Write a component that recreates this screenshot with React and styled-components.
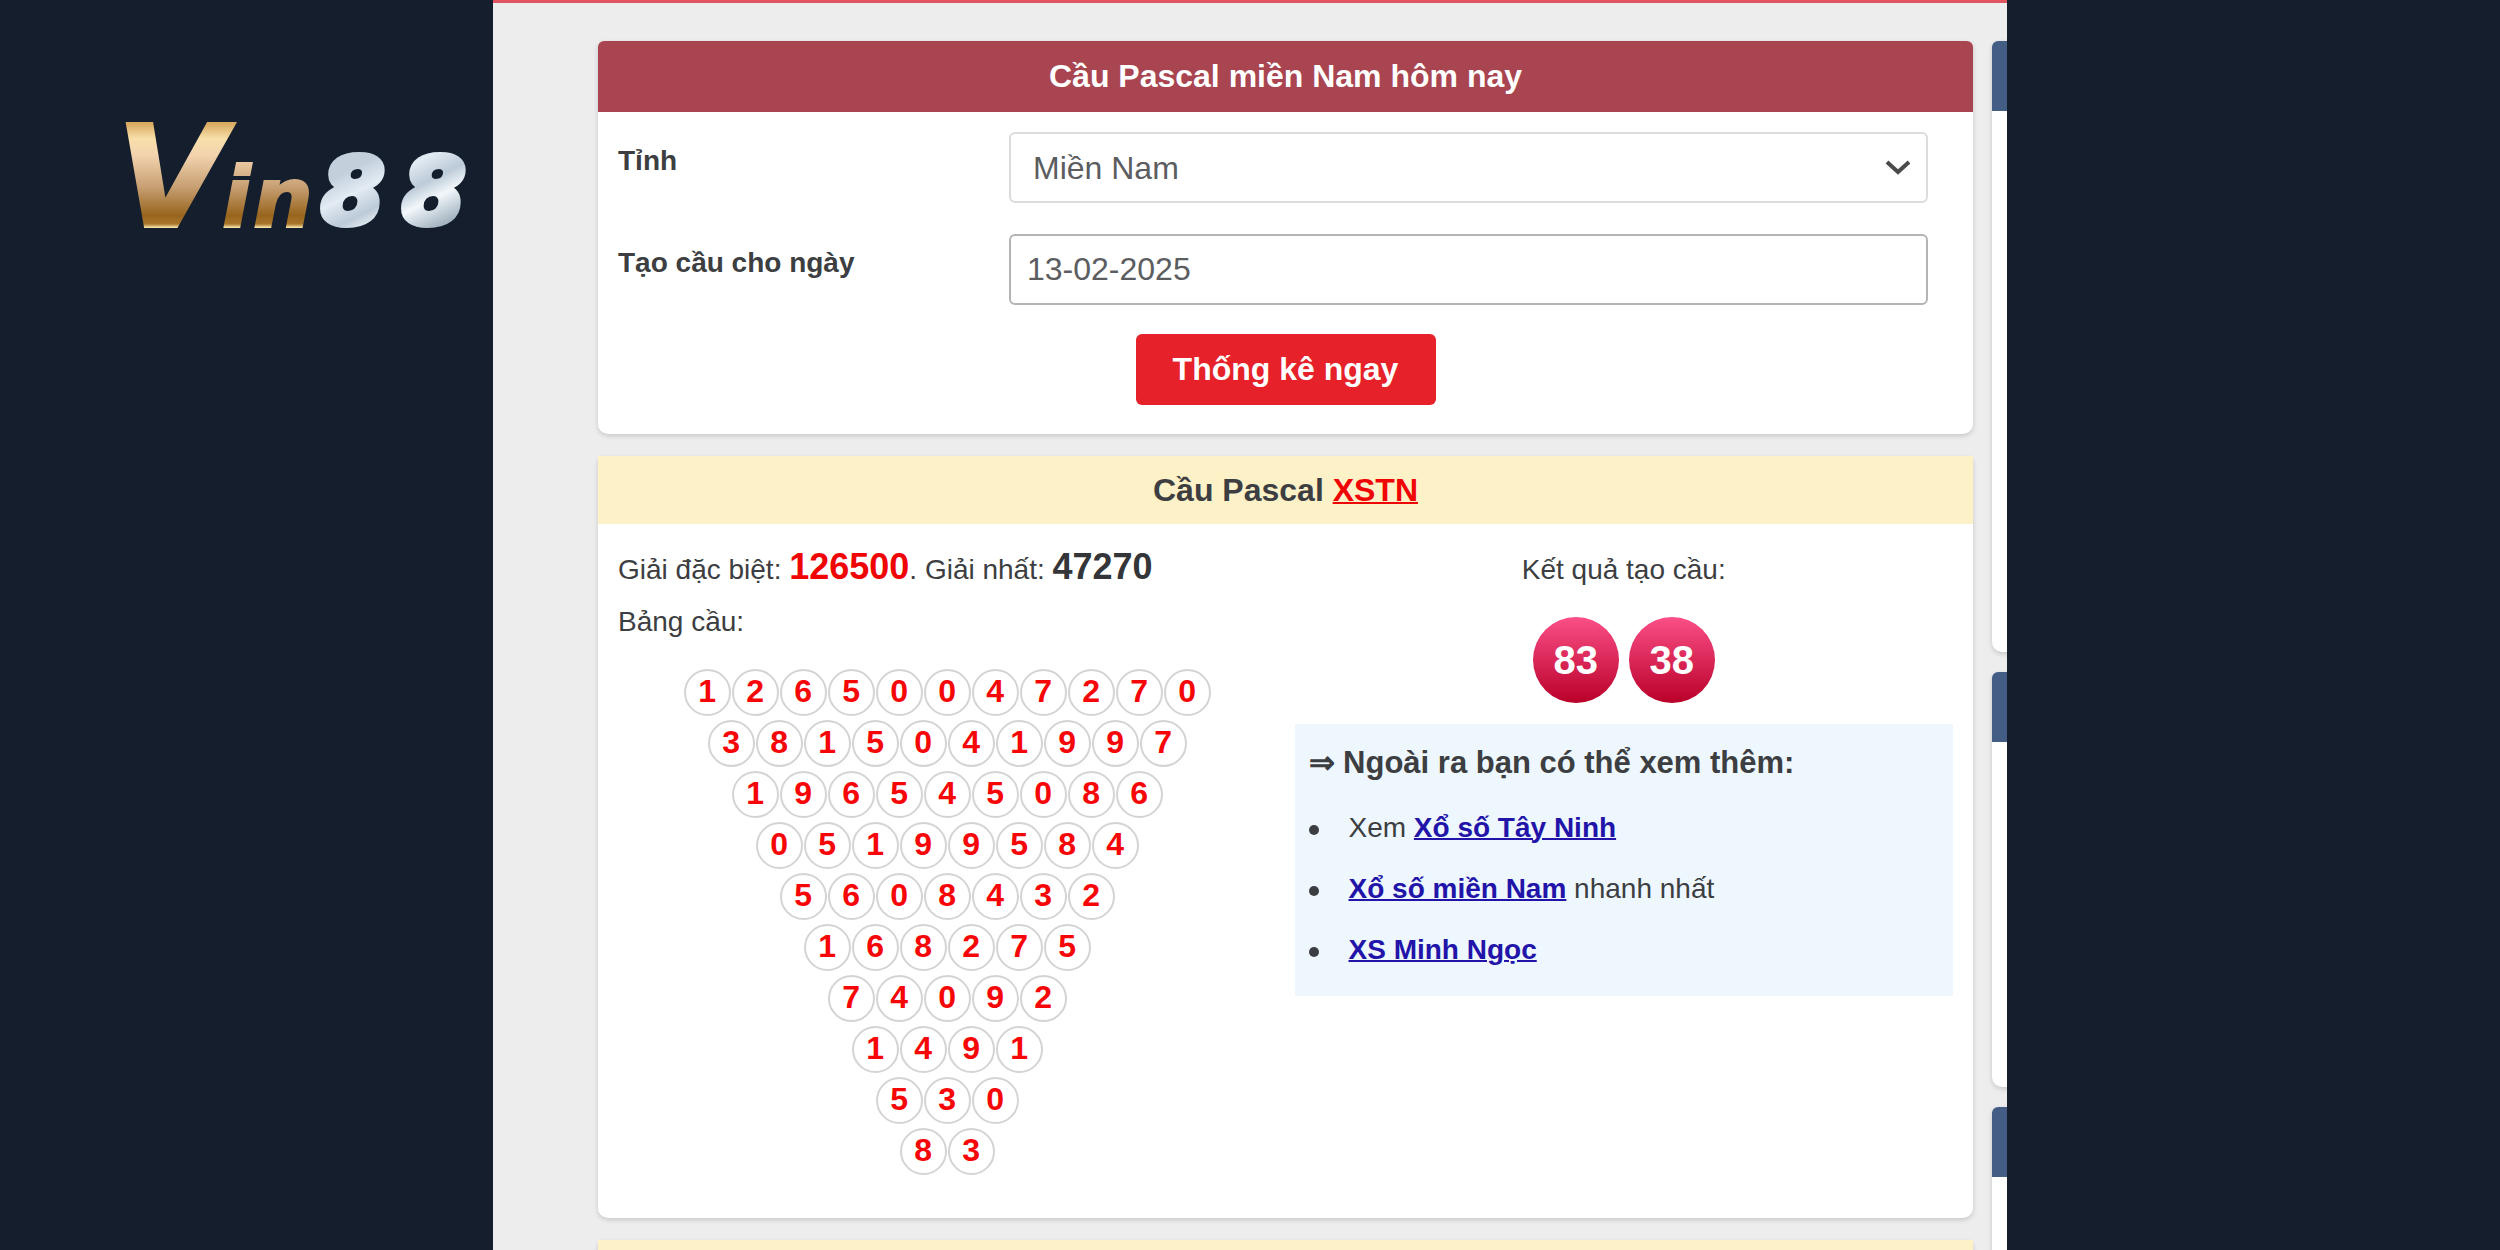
import React from "react";
import styled, { createGlobalStyle } from "styled-components";

const GlobalStyle = createGlobalStyle`
  *, *::before, *::after { box-sizing: border-box; }
  body {
    margin: 0;
    background: #141e2d;
    color: #3c3e41;
    font-family: "Liberation Sans", Arial, sans-serif;
    font-size: 28px;
  }
`;

const Shell = styled.div`
  display: grid;
  grid-template-columns: 493px minmax(0, 1fr) 493px;
  height: 100vh;
  overflow: hidden;
`;

const Brand = styled.header`
  padding: 80px 0 0 80px;
  svg { display: block; width: 413px; height: 200px; overflow: visible; }
`;

const Page = styled.div`
  display: flex;
  gap: 19px;
  padding: 38px 0 0 105px;
  background: #ededed;
  border-top: 3px solid #e05561;
  overflow: hidden;
`;

const Content = styled.main`
  flex: 1;
  min-width: 0;
  display: flex;
  flex-direction: column;
  gap: 22px;
`;

const Side = styled.aside`
  flex: 0 0 15px;
  min-width: 0;
  display: flex;
  flex-direction: column;
  gap: 20px;
`;

const Card = styled.section`
  flex: none;
  background: #fff;
  border-radius: 6px 6px 10px 10px;
  box-shadow: 0 2px 5px rgba(0, 0, 0, 0.16);
`;

const SideCard = styled(Card)`
  width: 300px;
  height: ${(p) => p.$height}px;
  &::before {
    content: "";
    display: block;
    height: 70px;
    border-radius: 6px 6px 0 0;
    background: #435d85;
  }
`;

const CardTitle = styled.h2`
  margin: 0;
  text-align: center;
  font-size: 32px;
  line-height: 71px;
  color: #fff;
  background: #a94451;
  border-radius: 6px 6px 0 0;
`;

const SubTitle = styled(CardTitle)`
  line-height: 68px;
  color: #3c3e41;
  background: #fdf1c8;
  border-radius: 0;
  a { color: #f00505; text-decoration-thickness: 2px; }
`;

const Form = styled.form`
  display: flex;
  flex-direction: column;
  gap: 31px;
  padding: 20px 45px 29px 20px;
`;

const Field = styled.div`
  display: grid;
  grid-template-columns: 391px minmax(0, 1fr);
  align-items: start;
  label { padding-top: 8px; font-weight: 700; line-height: 42px; }
`;

const controlStyle = `
  display: block;
  width: 100%;
  height: 71px;
  margin: 0;
  font: 32px "Liberation Sans", Arial, sans-serif;
  color: #5b5d60;
  background: #fff;
  border-radius: 6px;
  outline: none;
`;

const SelectBox = styled.div`
  position: relative;
  svg {
    position: absolute;
    right: 17px;
    top: 27px;
    width: 26px;
    height: 17px;
    pointer-events: none;
  }
`;

const Select = styled.select`
  ${controlStyle}
  appearance: none;
  padding: 0 22px;
  border: 2px solid #dcdcdc;
`;

const Input = styled.input`
  ${controlStyle}
  padding: 0 16px;
  border: 2px solid #b4b4b4;
`;

const Submit = styled.button`
  align-self: center;
  width: 300px;
  height: 71px;
  margin: -2px -25px 0 0;
  border: 0;
  border-radius: 6px;
  background: #e62129;
  color: #fff;
  font: 700 32px "Liberation Sans", Arial, sans-serif;
`;

const Columns = styled.div`
  display: grid;
  grid-template-columns: 1fr 1fr;
  gap: 18px;
  padding: 20px 20px 43px;
`;

const Line = styled.p`
  margin: 0;
  line-height: 52px;
  text-align: ${(p) => (p.$center ? "center" : "left")};
`;

const Prize = styled.strong`
  font-size: 36px;
  line-height: 36px;
  color: ${(p) => (p.$special ? "#f00505" : "#333538")};
`;

const Triangle = styled.div`
  display: flex;
  flex-direction: column;
  gap: 4px;
  margin-top: 21px;
`;

const TriangleRow = styled.div`
  display: flex;
  justify-content: center;
  gap: 1px;
`;

const Digit = styled.span`
  display: flex;
  align-items: center;
  justify-content: center;
  width: 47px;
  height: 47px;
  padding-bottom: 2px;
  border: 2px solid #d4d4d4;
  border-radius: 50%;
  color: #f60606;
  font-size: 32px;
  font-weight: 700;
`;

const Results = styled.div`
  display: flex;
  justify-content: center;
  gap: 10px;
  margin: 21px 0;
`;

const ResultBall = styled.span`
  display: flex;
  align-items: center;
  justify-content: center;
  width: 86px;
  height: 86px;
  border-radius: 50%;
  background: linear-gradient(#fb4f87, #b90029);
  color: #fff;
  font-size: 40px;
  font-weight: 700;
`;

const More = styled.div`
  padding: 14px 14px 16px;
  background: #eef7fe;
`;

const MoreTitle = styled.h3`
  margin: 0 0 9px;
  font-size: 31px;
  line-height: 50px;
`;

const MoreList = styled.ul`
  margin: 0;
  padding: 0;
  list-style: none;
  li {
    display: flex;
    align-items: center;
    line-height: 61px;
  }
  li::before {
    content: "";
    width: 10px;
    height: 10px;
    margin: 4px 30px 0 0;
    border-radius: 50%;
    background: #3c3e41;
  }
  a {
    color: #2214a8;
    font-weight: 700;
    text-decoration-thickness: 2px;
  }
`;

const rows = [
  "12650047270",
  "3815041997",
  "196545086",
  "05199584",
  "5608432",
  "168275",
  "74092",
  "1491",
  "530",
  "83",
];

function Logo() {
  return (
    <svg viewBox="80 80 413 200" role="img" aria-label="Vin88">
      <defs>
        <linearGradient id="gold" gradientUnits="userSpaceOnUse" x1="0" y1="124" x2="0" y2="228">
          <stop offset="0" stopColor="#d9ab62" />
          <stop offset="0.14" stopColor="#f8dfa9" />
          <stop offset="0.3" stopColor="#f2d3ae" />
          <stop offset="0.6" stopColor="#c8a074" />
          <stop offset="0.88" stopColor="#98651e" />
          <stop offset="0.96" stopColor="#a8752b" />
          <stop offset="1" stopColor="#fff0b4" />
        </linearGradient>
        <linearGradient id="silver" gradientUnits="userSpaceOnUse" x1="370" y1="160" x2="410" y2="240">
          <stop offset="0" stopColor="#c3d0dc" />
          <stop offset="0.25" stopColor="#e3ebf3" />
          <stop offset="0.5" stopColor="#bccad8" />
          <stop offset="0.7" stopColor="#f2f7fb" />
          <stop offset="1" stopColor="#a6b6c2" />
        </linearGradient>
      </defs>
      <g fontFamily="DejaVu Sans, sans-serif" fontWeight="700" fontStyle="italic">
        <text fill="url(#gold)" stroke="url(#gold)" strokeWidth="2">
          <tspan x="116" y="227" fontSize="142">V</tspan>
          <tspan x="222" y="227" fontSize="84">i</tspan>
          <tspan x="253" y="227" fontSize="84">n</tspan>
        </text>
        <text fill="url(#silver)" stroke="url(#silver)" strokeWidth="6" fontSize="92">
          <tspan x="321" y="224">8</tspan>
          <tspan x="402" y="224">8</tspan>
        </text>
      </g>
    </svg>
  );
}

export default function App() {
  return (
    <>
      <GlobalStyle />
      <Shell>
        <Brand>
          <Logo />
        </Brand>
        <Page>
          <Content>
            <Card>
              <CardTitle>Cầu Pascal miền Nam hôm nay</CardTitle>
              <Form onSubmit={(e) => e.preventDefault()}>
                <Field>
                  <label htmlFor="province">Tỉnh</label>
                  <SelectBox>
                    <Select id="province" defaultValue="mn">
                      <option value="mn">Miền Nam</option>
                    </Select>
                    <svg viewBox="0 0 26 17" fill="none" stroke="#4b4b4b" strokeWidth="4">
                      <path d="M2 3 L13 13 L24 3" />
                    </svg>
                  </SelectBox>
                </Field>
                <Field>
                  <label htmlFor="date">Tạo cầu cho ngày</label>
                  <Input id="date" type="text" defaultValue="13-02-2025" />
                </Field>
                <Submit type="submit">Thống kê ngay</Submit>
              </Form>
            </Card>
            <Card>
              <SubTitle>
                Cầu Pascal <a href="#xstn">XSTN</a>
              </SubTitle>
              <Columns>
                <div>
                  <Line>
                    Giải đặc biệt: <Prize $special>126500</Prize>. Giải nhất: <Prize>47270</Prize>
                  </Line>
                  <Line>Bảng cầu:</Line>
                  <Triangle>
                    {rows.map((row) => (
                      <TriangleRow key={row}>
                        {row.split("").map((d, i) => (
                          <Digit key={i}>{d}</Digit>
                        ))}
                      </TriangleRow>
                    ))}
                  </Triangle>
                </div>
                <div>
                  <Line $center>Kết quả tạo cầu:</Line>
                  <Results>
                    <ResultBall>83</ResultBall>
                    <ResultBall>38</ResultBall>
                  </Results>
                  <More>
                    <MoreTitle>⇒ Ngoài ra bạn có thể xem thêm:</MoreTitle>
                    <MoreList>
                      <li>
                        <span>Xem <a href="#tay-ninh">Xổ số Tây Ninh</a></span>
                      </li>
                      <li>
                        <span><a href="#mien-nam">Xổ số miền Nam</a> nhanh nhất</span>
                      </li>
                      <li>
                        <a href="#minh-ngoc">XS Minh Ngọc</a>
                      </li>
                    </MoreList>
                  </More>
                </div>
              </Columns>
            </Card>
            <Card>
              <SubTitle as="div">&nbsp;</SubTitle>
            </Card>
          </Content>
          <Side>
            <SideCard $height={611} />
            <SideCard $height={415} />
            <SideCard $height={415} />
          </Side>
        </Page>
      </Shell>
    </>
  );
}
